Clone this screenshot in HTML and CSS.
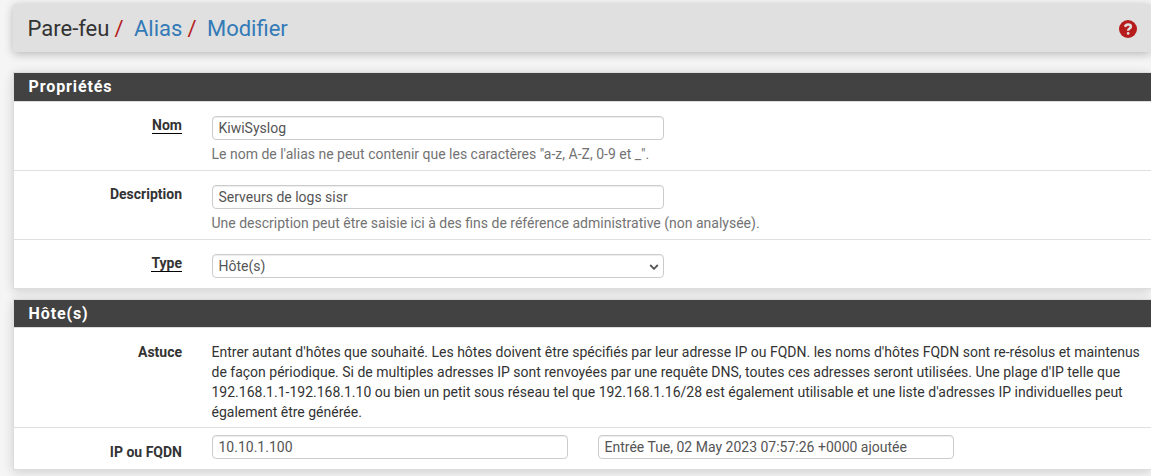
FILE: index.html
```html
<!DOCTYPE html>
<html lang="fr">
<head>
<meta charset="utf-8">
<title>Pare-feu: Alias: Modifier</title>
<link rel="stylesheet" href="styles.css">
</head>
<body>
<header class="header">
  <nav class="crumbs"><span>Pare-feu</span><i class="sep">/</i><a>Alias</a><i class="sep">/</i><a>Modifier</a></nav>
  <svg class="help" viewBox="0 0 18 18"><circle cx="9" cy="9" r="9"/><path d="M5.9 6.8C6.5 5.3 7.5 4.5 9 4.5C10.7 4.5 11.9 5.3 11.9 6.7C11.9 8.7 9.1 8.5 9.1 10.8"/><rect x="7.8" y="12" width="2.7" height="2.7" rx="1.3"/></svg>
</header>
<section class="panel">
  <h2 class="heading">Propriétés</h2>
  <div class="row">
    <label class="label"><span class="required">Nom</span></label>
    <div class="field"><input class="control" value="KiwiSyslog"><p class="hint">Le nom de l'alias ne peut contenir que les caractères "a-z, A-Z, 0-9 et _".</p></div>
  </div>
  <div class="row">
    <label class="label">Description</label>
    <div class="field"><input class="control" value="Serveurs de logs sisr"><p class="hint">Une description peut être saisie ici à des fins de référence administrative (non analysée).</p></div>
  </div>
  <div class="row type-row">
    <label class="label"><span class="required">Type</span></label>
    <div class="field"><div class="control select">Hôte(s)<svg class="chevron" viewBox="0 0 10 6"><path d="M1.2 1L5 4.8L8.8 1"/></svg></div></div>
  </div>
</section>
<section class="panel hosts">
  <h2 class="heading">Hôte(s)</h2>
  <div class="row tip-row">
    <span class="label">Astuce</span>
    <p class="tip">Entrer autant d'hôtes que souhaité. Les hôtes doivent être spécifiés par leur adresse IP ou FQDN. les noms d'hôtes FQDN sont re-résolus et maintenus<br>de façon périodique. Si de multiples adresses IP sont renvoyées par une requête DNS, toutes ces adresses seront utilisées. Une plage d'IP telle que<br>192.168.1.1-192.168.1.10 ou bien un petit sous réseau tel que 192.168.1.16/28 est également utilisable et une liste d'adresses IP individuelles peut<br>également être générée.</p>
  </div>
  <div class="row host-row">
    <label class="label">IP ou FQDN</label>
    <div class="pair"><input class="control" value="10.10.1.100"><input class="control" value="Entrée Tue, 02 May 2023 07:57:26 +0000 ajoutée"></div>
  </div>
</section>
</body>
</html>
```
FILE: styles.css
```css
* { box-sizing: border-box; }
body { margin: 0; padding-top: 4px; height: 476px; overflow: hidden; background: #f5f5f5; font: 14px/20px Roboto, sans-serif; color: #333; }
.header { margin-left: 13px; height: 48px; padding: 0 14px 0 14.5px; display: flex; align-items: center; justify-content: space-between; background: #e0e0e0; border-radius: 3px; box-shadow: 0 2px 10px rgba(0,0,0,.26); }
.crumbs { display: flex; padding-top: 2px; font-size: 22px; line-height: 30px; }
.sep { color: #b71c1c; font-style: normal; margin: 0 10.5px 0 5px; }
.crumbs a { color: #337ab7; }
.help { width: 18px; height: 18px; margin-top: 2px; fill: #b71c1c; }
.help path { fill: none; stroke: #e0e0e0; stroke-width: 2.5; }
.help rect { fill: #e0e0e0; }
.panel { margin: 20px 0 0 13px; background: #fff; border: 1px solid #ddd; border-right: 0; box-shadow: 0 2px 10px rgba(0,0,0,.16); }
.heading { margin: 0; height: 29px; padding-left: 14.5px; background: #424242; border-bottom: 1px solid #ddd; color: #fff; font-size: 16px; line-height: 28px; letter-spacing: .9px; font-weight: 700; }
.row { display: flex; height: 69px; padding-top: 14px; border-bottom: 1px solid #e0e0e0; }
.label { width: 168px; margin-right: 29.5px; flex-shrink: 0; text-align: right; font-weight: 700; line-height: 19px; }
.required { display: inline-block; line-height: 17px; height: 17px; border-bottom: 1px solid #000; }
.control { display: block; width: 452px; height: 24px; padding: 0 6px 1px; border: 1px solid #ccc; border-radius: 4px; background: #fff; box-shadow: inset 0 1px 1px rgba(0,0,0,.075); color: #555; font: inherit; }
.hint { margin: 4px 0 0; color: #737373; white-space: nowrap; }
.type-row { height: 48px; border: 0; }
.select { position: relative; line-height: 22px; }
.chevron { position: absolute; right: 4px; top: 9px; width: 10px; height: 6px; fill: none; stroke: #555; stroke-width: 1.8; }
.hosts { margin-top: 10px; }
.hosts .heading { height: 28px; line-height: 27px; }
.tip-row { height: 100px; }
.tip-row .label { line-height: 20px; }
.tip { margin: 0; white-space: nowrap; }
.host-row { height: 41px; padding-top: 7px; border: 0; }
.host-row .label { padding-top: 8px; }
.pair { display: flex; gap: 30px; }
.pair .control { width: 356px; }
```
